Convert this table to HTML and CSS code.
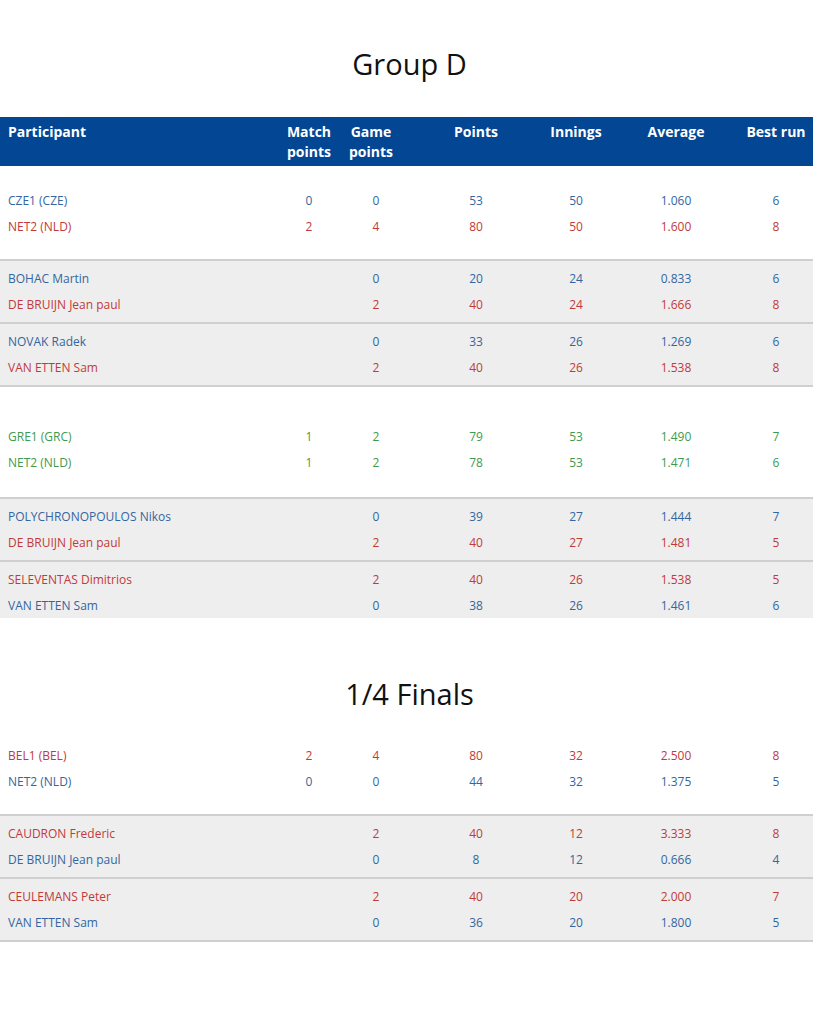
FILE: index.html
```html
<!DOCTYPE html>
<html>
<head>
<meta charset="utf-8">
<link rel="stylesheet" href="styles.css">
</head>
<body>
<h2 class="title title-first">Group D</h2>
<div class="table">
  <div class="grid head">
    <span>Participant</span>
    <span>Match<br>points</span>
    <span class="h-game">Game<br>points</span>
    <span>Points</span>
    <span>Innings</span>
    <span>Average</span>
    <span>Best run</span>
  </div>

  <div class="block team">
    <div class="grid row blue"><span>CZE1 (CZE)</span><span>0</span><span>0</span><span>53</span><span>50</span><span>1.060</span><span>6</span></div>
    <div class="grid row red"><span>NET2 (NLD)</span><span>2</span><span>4</span><span>80</span><span>50</span><span>1.600</span><span>8</span></div>
  </div>
  <div class="block sub">
    <div class="grid row blue"><span>BOHAC Martin</span><span></span><span>0</span><span>20</span><span>24</span><span>0.833</span><span>6</span></div>
    <div class="grid row red"><span>DE BRUIJN Jean paul</span><span></span><span>2</span><span>40</span><span>24</span><span>1.666</span><span>8</span></div>
  </div>
  <div class="block sub">
    <div class="grid row blue"><span>NOVAK Radek</span><span></span><span>0</span><span>33</span><span>26</span><span>1.269</span><span>6</span></div>
    <div class="grid row red"><span>VAN ETTEN Sam</span><span></span><span>2</span><span>40</span><span>26</span><span>1.538</span><span>8</span></div>
  </div>

  <div class="block team team-next">
    <div class="grid row green"><span>GRE1 (GRC)</span><span>1</span><span>2</span><span>79</span><span>53</span><span>1.490</span><span>7</span></div>
    <div class="grid row green"><span>NET2 (NLD)</span><span>1</span><span>2</span><span>78</span><span>53</span><span>1.471</span><span>6</span></div>
  </div>
  <div class="block sub">
    <div class="grid row blue"><span>POLYCHRONOPOULOS Nikos</span><span></span><span>0</span><span>39</span><span>27</span><span>1.444</span><span>7</span></div>
    <div class="grid row red"><span>DE BRUIJN Jean paul</span><span></span><span>2</span><span>40</span><span>27</span><span>1.481</span><span>5</span></div>
  </div>
  <div class="block sub sub-open">
    <div class="grid row red"><span>SELEVENTAS Dimitrios</span><span></span><span>2</span><span>40</span><span>26</span><span>1.538</span><span>5</span></div>
    <div class="grid row blue"><span>VAN ETTEN Sam</span><span></span><span>0</span><span>38</span><span>26</span><span>1.461</span><span>6</span></div>
  </div>
</div>

<h2 class="title title-second">1/4 Finals</h2>
<div class="table">
  <div class="block team team-final">
    <div class="grid row red"><span>BEL1 (BEL)</span><span>2</span><span>4</span><span>80</span><span>32</span><span>2.500</span><span>8</span></div>
    <div class="grid row blue"><span>NET2 (NLD)</span><span>0</span><span>0</span><span>44</span><span>32</span><span>1.375</span><span>5</span></div>
  </div>
  <div class="block sub">
    <div class="grid row red"><span>CAUDRON Frederic</span><span></span><span>2</span><span>40</span><span>12</span><span>3.333</span><span>8</span></div>
    <div class="grid row blue"><span>DE BRUIJN Jean paul</span><span></span><span>0</span><span>8</span><span>12</span><span>0.666</span><span>4</span></div>
  </div>
  <div class="block sub sub-closed">
    <div class="grid row red"><span>CEULEMANS Peter</span><span></span><span>2</span><span>40</span><span>20</span><span>2.000</span><span>7</span></div>
    <div class="grid row blue"><span>VAN ETTEN Sam</span><span></span><span>0</span><span>36</span><span>20</span><span>1.800</span><span>5</span></div>
  </div>
</div>
</body>
</html>
```
FILE: styles.css
```css
html, body {
  margin: 0;
  padding: 0;
  background: #ffffff;
}
body {
  font-family: "Open Sans", "DejaVu Sans", sans-serif;
  color: #222;
}
.title {
  margin: 0;
  font-weight: 400;
  font-size: 29px;
  line-height: 40px;
  text-align: center;
  color: #111;
}
.title-first {
  padding-top: 44px;
  margin-bottom: 33px;
}
.title-second {
  margin-top: 56px;
  margin-bottom: 28px;
}
.table {
  width: 813px;
}
.grid {
  display: grid;
  grid-template-columns: 275px 68px 66px 117px 100px 100px 87px;
}
.grid > span {
  text-align: center;
}
.grid > span:first-child {
  text-align: left;
  padding-left: 8px;
}
.grid > span:nth-child(4) {
  padding-left: 17px;
}
.grid > span:nth-child(7) {
  padding-left: 13px;
}
.head {
  background: #034694;
  color: #ffffff;
  font-weight: 700;
  font-size: 14px;
  line-height: 20px;
  padding: 5px 0 4px;
}
.head .h-game {
  padding-right: 10px;
}
.row {
  font-size: 12px;
  line-height: 24px;
  height: 26px;
  box-sizing: border-box;
  padding-top: 2px;
}
.blue { color: #3366a0; }
.red { color: #c13a3a; }
.green { color: #3f9a50; }
.team {
  background: #ffffff;
  padding: 21px 0 20px;
}
.team-next {
  border-top: 2px solid #cfcfcf;
  padding-top: 36px;
  padding-bottom: 22px;
}
.team-final {
  padding-top: 0;
  padding-bottom: 20px;
}
.sub {
  background: #eeeeee;
  border-top: 2px solid #cfcfcf;
  padding: 4px 0 5px;
}
.sub-open {
  padding-bottom: 0;
}
.sub-closed {
  border-bottom: 2px solid #cfcfcf;
}
```
